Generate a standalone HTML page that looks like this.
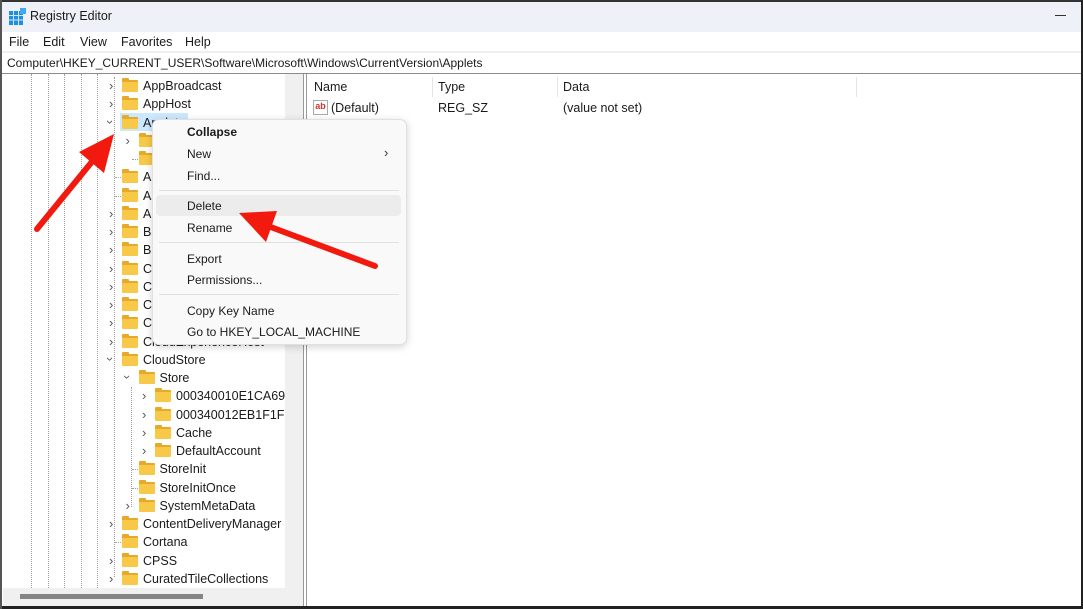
<!DOCTYPE html>
<html><head><meta charset="utf-8"><style>
*{margin:0;padding:0;box-sizing:border-box}
body{width:1083px;height:609px;overflow:hidden;background:#fff;font-family:"Liberation Sans",sans-serif;font-size:12px;color:#1a1a1a;position:relative}
.abs{position:absolute}
.row{position:absolute;height:18px;line-height:18px;white-space:nowrap}
.fold{position:absolute;width:16px;height:12px;top:3px;background:#f8c948;border-radius:1px;border-top:2px solid #e6a92a}
.fold:before{content:"";position:absolute;left:0;top:-4px;width:7px;height:3px;background:#e6a92a;border-radius:1px 1px 0 0}
.chev{position:absolute;top:0;font-size:11px;color:#555}
.vl{position:absolute;top:74px;height:514px;border-left:1px dotted #a0a0a0}
.mi{position:absolute;left:187px;font-size:12px;color:#1a1a1a}
</style></head><body>
<div class="abs" style="left:0;top:0;width:1083px;height:32px;background:#eef2f8"></div>
<svg class="abs" style="left:9px;top:8px" width="17" height="17" viewBox="0 0 17 17">
<rect x="0" y="3" width="14" height="14" fill="#1f8de0"/>
<g stroke="#cfe6fa" stroke-width="1"><line x1="0" y1="7.5" x2="14" y2="7.5"/><line x1="0" y1="12" x2="14" y2="12"/><line x1="4.5" y1="3" x2="4.5" y2="17"/><line x1="9.5" y1="3" x2="9.5" y2="17"/></g>
<rect x="11" y="0" width="6" height="6" fill="#3fa9f5"/></svg>
<div class="abs" style="left:30px;top:9px;font-size:12.5px">Registry Editor</div>
<div class="abs" style="left:1055px;top:15px;width:11px;height:1px;background:#333"></div>
<div class="abs" style="left:9px;top:35px;font-size:12.5px">File</div>
<div class="abs" style="left:43px;top:35px;font-size:12.5px">Edit</div>
<div class="abs" style="left:80px;top:35px;font-size:12.5px">View</div>
<div class="abs" style="left:121px;top:35px;font-size:12.5px">Favorites</div>
<div class="abs" style="left:185px;top:35px;font-size:12.5px">Help</div>
<div class="abs" style="left:0;top:51px;width:1083px;height:2px;background:#efefef"></div>
<div class="abs" style="left:7px;top:56px;font-size:12px">Computer\HKEY_CURRENT_USER\Software\Microsoft\Windows\CurrentVersion\Applets</div>
<div class="abs" style="left:0;top:73px;width:1083px;height:1px;background:#8a8a90"></div>
<div class="vl" style="left:31px"></div><div class="vl" style="left:48px"></div><div class="vl" style="left:64px"></div><div class="vl" style="left:81px"></div><div class="vl" style="left:97px"></div>
<div class="abs" style="left:114px;top:77px;height:500px;border-left:1px dotted #a0a0a0"></div>
<div class="abs" style="left:131px;top:387px;height:120px;border-left:1px dotted #a0a0a0"></div>
<div class="abs" style="left:120px;top:113px;width:68px;height:18px;background:#cce8ff"></div>
<div id="tree"></div>
<div class="abs" style="left:285px;top:74px;width:18px;height:514px;background:#f0f0f0"></div>
<div class="abs" style="left:303px;top:74px;width:1px;height:532px;background:#9a9a9a"></div>
<div class="abs" style="left:306px;top:74px;width:1px;height:532px;background:#9a9a9a"></div>
<div class="abs" style="left:3px;top:588px;width:300px;height:18px;background:#f0f0f0"></div>
<div class="abs" style="left:20px;top:594px;width:183px;height:5px;background:#858585"></div>
<div class="abs" style="left:314px;top:80px;font-size:12.5px">Name</div>
<div class="abs" style="left:432px;top:77px;width:1px;height:20px;background:#e5e5e5"></div>
<div class="abs" style="left:438px;top:80px;font-size:12.5px">Type</div>
<div class="abs" style="left:557px;top:77px;width:1px;height:20px;background:#e5e5e5"></div>
<div class="abs" style="left:563px;top:80px;font-size:12.5px">Data</div>
<div class="abs" style="left:856px;top:77px;width:1px;height:20px;background:#e5e5e5"></div>
<div class="abs" style="left:313px;top:100px;width:15px;height:15px;border:1px solid #aaa;background:#fff;font-size:9px;font-weight:bold;color:#d0352a;line-height:11px;text-align:center">ab</div>
<div class="abs" style="left:331px;top:101px;font-size:12.5px">(Default)</div>
<div class="abs" style="left:438px;top:101px;font-size:12.5px">REG_SZ</div>
<div class="abs" style="left:563px;top:101px;font-size:12.5px">(value not set)</div>
<div class="abs" style="left:0;top:0;width:1083px;height:2px;background:#333"></div>
<div class="abs" style="left:0;top:606px;width:1083px;height:3px;background:#222"></div>
<div class="abs" style="left:1081px;top:0;width:2px;height:609px;background:#222"></div>
<div class="abs" style="left:0;top:0;width:2px;height:609px;background:#555"></div>
<div class="abs" style="left:152px;top:119px;width:255px;height:226px;background:#f9f9f9;border:1px solid #e0e0e0;border-radius:7px;box-shadow:0 2px 8px rgba(0,0,0,.18)"></div>
<div class="abs" style="left:156px;top:195px;width:245px;height:21px;background:#ececec;border-radius:4px"></div>
<div class="abs" style="left:159px;top:190px;width:240px;height:1px;background:#e0e0e0"></div>
<div class="abs" style="left:159px;top:242px;width:240px;height:1px;background:#e0e0e0"></div>
<div class="abs" style="left:159px;top:294px;width:240px;height:1px;background:#e0e0e0"></div>
<div class="mi" style="top:125px;font-weight:bold">Collapse</div>
<div class="mi" style="top:147px">New</div>
<div class="abs" style="left:384px;top:145px;font-size:13px;color:#333">&#x203A;</div>
<div class="mi" style="top:169px">Find...</div>
<div class="mi" style="top:199px">Delete</div>
<div class="mi" style="top:221px">Rename</div>
<div class="mi" style="top:252px">Export</div>
<div class="mi" style="top:273px">Permissions...</div>
<div class="mi" style="top:304px">Copy Key Name</div>
<div class="mi" style="top:325px">Go to HKEY_LOCAL_MACHINE</div>
<svg class="abs" style="left:0;top:0" width="1083" height="609">
<line x1="37" y1="229" x2="95" y2="158" stroke="#f21a0e" stroke-width="6" stroke-linecap="round"/>
<polygon points="114,134 79,152 104,173" fill="#f21a0e"/>
<line x1="375" y1="266" x2="268" y2="226" stroke="#f21a0e" stroke-width="6" stroke-linecap="round"/>
<polygon points="239,213 277,211 266,242" fill="#f21a0e"/>
</svg>
<script>
var rows=[["AppBroadcast",0,">"],["AppHost",0,">"],["Applets",0,"v"],["Microsoft",1,">"],["Regedit",1,""],["AppReadiness",0,""],["Assistance",0,""],["AuthHost",0,">"],["BackgroundAccess",0,">"],["BitLocker",0,">"],["CDP",0,">"],["Capture",0,">"],["CloudDesktop",0,">"],["CloudExperience",0,">"],["CloudExperienceHost",0,">"],["CloudStore",0,"v"],["Store",1,"v"],["000340010E1CA69C",2,">"],["000340012EB1F1FF",2,">"],["Cache",2,">"],["DefaultAccount",2,">"],["StoreInit",1,""],["StoreInitOnce",1,""],["SystemMetaData",1,">"],["ContentDeliveryManager",0,">"],["Cortana",0,""],["CPSS",0,">"],["CuratedTileCollections",0,">"]];
var h="";rows.forEach(function(r,i){var t=77+i*18.25,o=r[1]*16.5;
h+='<div class="row" style="top:'+t+'px;left:0;width:285px;overflow:hidden;height:18px">';
if(r[2]==">")h+='<div class="chev" style="left:'+(109+o)+'px;font-size:13px">&#x203A;</div>';
else if(r[2]=="v")h+='<div class="chev" style="left:'+(108+o)+'px;top:-1px;transform:rotate(90deg);font-size:13px">&#x203A;</div>';
else h+='<div style="position:absolute;left:'+(115+o)+'px;top:9px;width:6px;border-top:1px dotted #a0a0a0"></div>';
h+='<div class="fold" style="left:'+(122+o)+'px"></div><div style="position:absolute;left:'+(143+o)+'px;top:0;font-size:12.5px">'+r[0]+'</div></div>';});
document.getElementById("tree").innerHTML=h;
</script>
</body></html>
